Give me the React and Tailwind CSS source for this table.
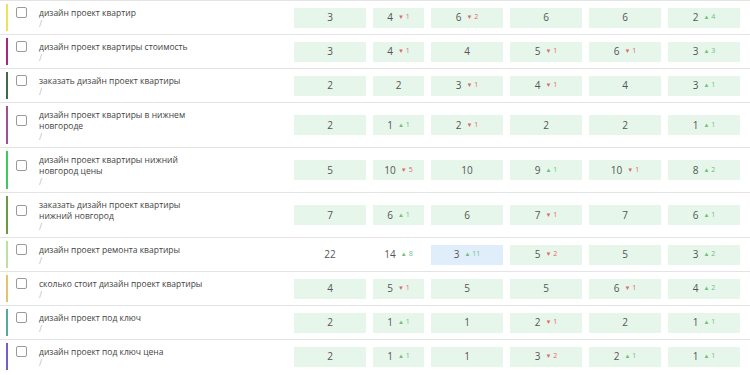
import React from 'react';

const rows = [
    { title: ['дизайн проект квартир'], bar: 'bg-[#ece35c]', cells: [[3], [4, -1], [6, -2], [6], [6], [2, 4]] },
    { title: ['дизайн проект квартиры стоимость'], bar: 'bg-[#a8297c]', cells: [[3], [4, -1], [4], [5, -1], [6, -1], [3, 3]] },
    { title: ['заказать дизайн проект квартиры'], bar: 'bg-[#3e6a48]', cells: [[2], [2], [3, -1], [4, -1], [4], [3, 1]] },
    { title: ['дизайн проект квартиры в нижнем', 'новгороде'], bar: 'bg-[#a24f8d]', cells: [[2], [1, 1], [2, -1], [2], [2], [1, 1]] },
    { title: ['дизайн проект квартиры нижний', 'новгород цены'], bar: 'bg-[#3ccb5c]', cells: [[5], [10, -5], [10], [9, 1], [10, -1], [8, 2]] },
    { title: ['заказать дизайн проект квартиры', 'нижний новгород'], bar: 'bg-[#6b9a42]', cells: [[7], [6, 1], [6], [7, -1], [7], [6, 1]] },
    { title: ['дизайн проект ремонта квартиры'], bar: 'bg-[#bde09e]', cells: [[22, 0, 'none'], [14, 8, 'none'], [3, 11, 'blue'], [5, -2], [5], [3, 2]] },
    { title: ['сколько стоит дизайн проект квартиры'], bar: 'bg-[#e2c46c]', cells: [[4], [5, -1], [5], [5], [6, -1], [4, 2]] },
    { title: ['дизайн проект под ключ'], bar: 'bg-[#58a8a2]', cells: [[2], [1, 1], [1], [2, -1], [2], [1, 1]] },
    { title: ['дизайн проект под ключ цена'], bar: 'bg-[#7a5cc6]', cells: [[2], [1, 1], [1], [3, -2], [2, 1], [1, 1]] },
];

const widths = ['w-[72px]', 'w-[51px]', 'w-[72px]', 'w-[72px]', 'w-[72px]', 'w-[72px]'];

const Cell = ({ value, delta, tone, width }) => {
    const bg = tone === 'none' ? 'bg-white' : tone === 'blue' ? 'bg-[#e0eefb]' : 'bg-[#e6f6ea]';
    return (
        <div className={`${width} ${bg} h-[20px] flex items-center justify-center text-[10px] text-[#555]`}>
            <span>{value}</span>
            {delta > 0 && (
                <span className="ml-[5px] flex items-center text-[7px] text-[#6cc07c]">
                    <span className="text-[6px] mr-[2px]">▲</span>
                    {delta}
                </span>
            )}
            {delta < 0 && (
                <span className="ml-[5px] flex items-center text-[7px] text-[#e06a6a]">
                    <span className="text-[6px] mr-[2px]">▼</span>
                    {-delta}
                </span>
            )}
        </div>
    );
};

export default function App() {
    return (
        <div className="w-[750px] h-[375px] overflow-hidden bg-white font-['Open_Sans',sans-serif]">
            {rows.map((row, i) => (
                <div key={i} className="flex border-t border-[#e4e4e4] pr-[10px]">
                    <div className="w-[294px] flex pl-[6px]">
                        <div className={`w-[2px] my-[3px] shrink-0 ${row.bar}`} />
                        <div className="flex flex-col pt-[6px] pb-[5px]">
                            <div className="flex items-center">
                                <div className="ml-[8px] mr-[12px] w-[11px] h-[11px] shrink-0 rounded-[2px] border border-[#9a9a9a] bg-white" />
                                <div className="text-[8.5px] leading-[11px] text-[#444]">
                                    {row.title.map((t, j) => (
                                        <div key={j}>{t}</div>
                                    ))}
                                </div>
                            </div>
                            <div className="pl-[31px] text-[8.5px] leading-[11px] text-[#bbb]">/</div>
                        </div>
                    </div>
                    <div className="flex items-center gap-[7px]">
                        {row.cells.map((c, j) => (
                            <Cell key={j} value={c[0]} delta={c[1] || 0} tone={c[2]} width={widths[j]} />
                        ))}
                    </div>
                </div>
            ))}
        </div>
    );
}
